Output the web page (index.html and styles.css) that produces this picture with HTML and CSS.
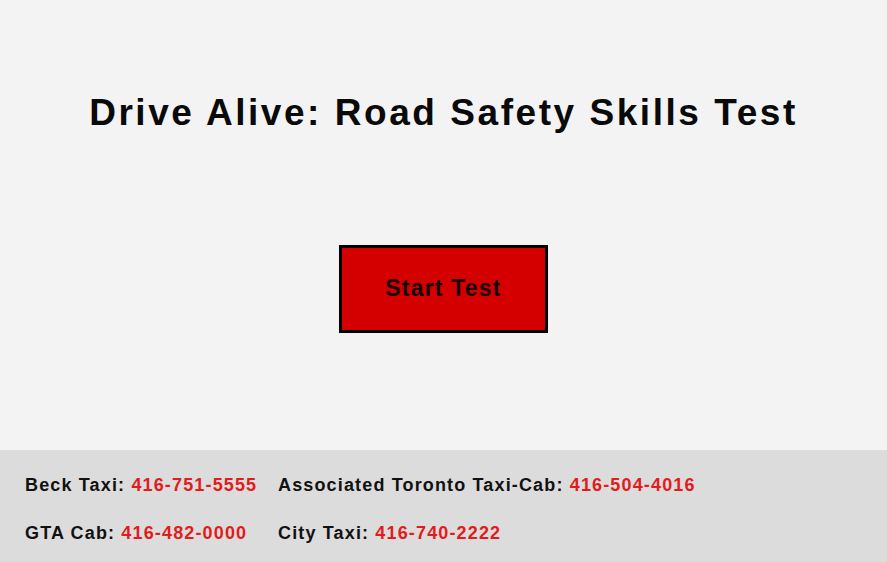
FILE: index.html
```html
<!DOCTYPE html>
<html lang="en">
<head>
<meta charset="utf-8">
<title>Drive Alive: Road Safety Skills Test</title>
<link rel="stylesheet" href="styles.css">
</head>
<body>
<div class="page">
  <main class="intro">
    <h1 class="title">Drive Alive: Road Safety Skills Test</h1>
    <button class="start-btn" type="button">Start Test</button>
  </main>
  <footer class="taxis">
    <div class="taxi"><span class="name">Beck Taxi:</span> <span class="phone">416-751-5555</span></div>
    <div class="taxi"><span class="name">Associated Toronto Taxi-Cab:</span> <span class="phone">416-504-4016</span></div>
    <div class="taxi"><span class="name">GTA Cab:</span> <span class="phone">416-482-0000</span></div>
    <div class="taxi"><span class="name">City Taxi:</span> <span class="phone">416-740-2222</span></div>
  </footer>
</div>
</body>
</html>
```
FILE: styles.css
```css
html, body {
  margin: 0;
  padding: 0;
  height: 100%;
}

body {
  background: #f3f3f3;
  font-family: "Liberation Sans", Arial, sans-serif;
  color: #000;
}

.page {
  display: flex;
  flex-direction: column;
  height: 100%;
}

.intro {
  flex: 1;
  display: flex;
  flex-direction: column;
  align-items: center;
  padding-top: 92px;
}

.title {
  margin: 0;
  font-size: 37px;
  font-weight: bold;
  line-height: 42px;
  letter-spacing: 2.55px;
  color: #0a0a0a;
}

.start-btn {
  margin-top: 111px;
  width: 209px;
  height: 88px;
  background: #d40000;
  border: 3px solid #000;
  font-family: inherit;
  font-size: 23px;
  font-weight: bold;
  letter-spacing: 1.2px;
  color: #160202;
  padding: 0 0 2px 0;
}

.taxis {
  height: 112px;
  box-sizing: border-box;
  background: #dcdcdc;
  padding: 24px 0 0 25px;
  display: grid;
  grid-template-columns: 253px auto;
  grid-auto-rows: 48px;
  align-content: start;
}

.taxi {
  font-size: 18px;
  font-weight: bold;
  line-height: 22px;
  letter-spacing: 1.15px;
  white-space: nowrap;
}

.name {
  color: #111;
}

.phone {
  color: #e21b1b;
}
```
